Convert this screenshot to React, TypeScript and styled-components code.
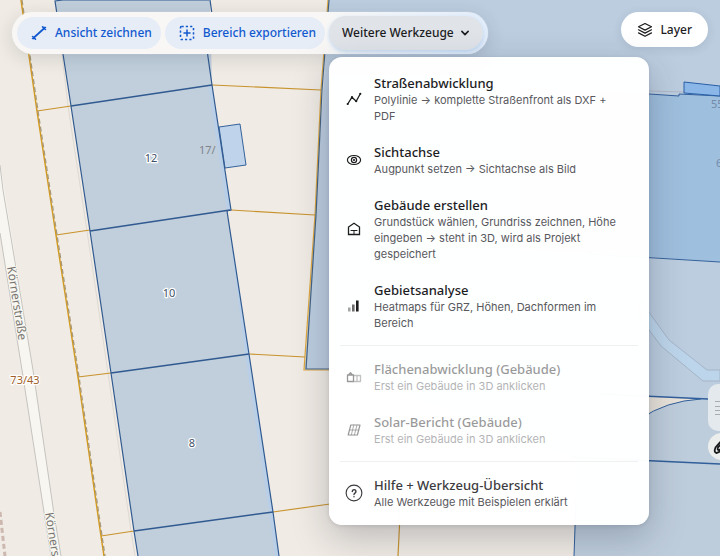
import React from "react";
import styled, { createGlobalStyle, css } from "styled-components";

const GlobalStyle = createGlobalStyle`
  *, *::before, *::after { box-sizing: border-box; }
  body { margin: 0; font-family: "Noto Sans", "Open Sans", sans-serif; color: #1d1d1f; overflow: hidden; }
  button { font: inherit; color: inherit; border: 0; margin: 0; cursor: pointer; }
`;

const Page = styled.main`
  display: grid;
  height: 100vh;
  overflow: hidden;
  background: #f0ebe4;
`;

const MapCanvas = styled.svg`
  grid-area: 1 / 1;
  width: 100%;
  height: 100%;
  min-height: 0;
  font-family: "Noto Sans", sans-serif;
`;

const Overlay = styled.div`
  grid-area: 1 / 1;
  z-index: 1;
  display: flex;
  justify-content: space-between;
  align-items: flex-start;
  padding: 12px;
`;

const Toolbar = styled.nav`
  display: flex;
  align-items: center;
  gap: 4px;
  height: 42px;
  padding: 0 5px;
  border-radius: 21px;
  background: linear-gradient(90deg, #f8f7f6 0 66%, #e2edfa 100%);
  box-shadow: 0 4px 18px rgba(40, 50, 70, 0.16), 0 0 1px rgba(255, 255, 255, 0.9);
`;

const ToolButton = styled.button`
  display: flex;
  align-items: center;
  justify-content: center;
  gap: 8px;
  height: 32px;
  padding: 0 9px 0 14px;
  border-radius: 16px;
  background: #e6edf7;
  color: #1259cf;
  font-size: 12px;
  font-weight: 500;
  line-height: 18px;
  white-space: nowrap;
`;

const MoreButton = styled(ToolButton)`
  gap: 6px;
  height: 34px;
  padding: 0 13px;
  border-radius: 17px;
  background: #e0e4e9;
  color: #1d1d1f;
  box-shadow: 0 2px 4px rgba(110, 165, 230, 0.35);
`;

const MenuAnchor = styled.div`
  position: relative;
`;

const Menu = styled.div`
  position: absolute;
  top: calc(100% + 7px);
  left: 0;
  width: 320px;
  padding: 8px 7px 5px;
  border-radius: 13px;
  background: rgba(255, 255, 255, 0.985);
  box-shadow: 0 12px 36px rgba(30, 40, 60, 0.26), 0 1px 4px rgba(30, 40, 60, 0.12);
`;

const MenuItem = styled.button<{ $tone?: "soft" }>`
  display: grid;
  grid-template-columns: 18px 1fr;
  align-items: center;
  gap: 11px;
  width: 100%;
  padding: 9px 16px 10px 9px;
  border-radius: 8px;
  background: transparent;
  text-align: left;
  ${({ $tone }) => $tone === "soft" && css`color: #3c3c40;`}
  &:disabled { opacity: 0.45; cursor: default; }
`;

const ItemIcon = styled.span`
  display: flex;
  justify-content: center;
`;

const ItemText = styled.span`
  display: flex;
  flex-direction: column;
`;

const ItemTitle = styled.span`
  font-size: 13px;
  font-weight: 500;
  line-height: 18px;
`;

const ItemNote = styled.span`
  color: #58585d;
  font-family: Inter, sans-serif;
  font-size: 11px;
  line-height: 16px;
`;

const Divider = styled.hr`
  height: 1px;
  margin: 4px 4px 5px;
  border: 0;
  background: #f0f0f1;
`;

const LayerButton = styled.button`
  display: flex;
  align-items: center;
  gap: 7px;
  height: 35px;
  padding: 0 16px;
  border-radius: 18px;
  background: #fff;
  box-shadow: 0 2px 10px rgba(40, 60, 90, 0.12);
  font-size: 12px;
  font-weight: 500;
`;

const SideDock = styled.aside`
  position: absolute;
  top: 384px;
  right: 0;
  display: flex;
  flex-direction: column;
  gap: 2px;
  width: 12px;
  overflow: hidden;
  z-index: 1;
`;

const DockButton = styled.button<{ $round?: boolean }>`
  display: flex;
  align-items: center;
  width: 40px;
  height: ${({ $round }) => ($round ? 27 : 47)}px;
  padding: 0 ${({ $round }) => ($round ? 5 : 7)}px;
  border-radius: ${({ $round }) => ($round ? 14 : 10)}px;
  background: ${({ $round }) => ($round ? "#eceeed" : "#e4e9ed")};
`;

function Svg({ size = 16, children }: { size?: number; children: React.ReactNode }) {
  return (
    <svg width={size} height={size} viewBox="0 0 16 16" fill="none" stroke="currentColor" strokeWidth="1.3" strokeLinecap="round" strokeLinejoin="round" aria-hidden="true">
      {children}
    </svg>
  );
}

const icons = {
  polyline: (
    <>
      <path d="M1.700 13 6 6.200l4.200 4L14.300 2.800" />
      <g fill="currentColor" stroke="none">
        <circle cx="1.700" cy="13" r="1.100" /><circle cx="6" cy="6.200" r="1.100" />
        <circle cx="10.200" cy="10.200" r="1.100" /><circle cx="14.300" cy="2.800" r="1.100" />
      </g>
    </>
  ),
  eye: (
    <>
      <ellipse cx="8" cy="8" rx="6.600" ry="4.500" strokeWidth="1.200" />
      <circle cx="8" cy="8" r="2.600" strokeWidth="1.200" />
      <circle cx="8" cy="8" r="1.100" fill="currentColor" stroke="none" />
    </>
  ),
  house: (
    <>
      <path d="M2.500 13.500V6L8 2.300 13.500 6v7.500Z" strokeLinejoin="miter" />
      <path d="M5 9.500h6M8 9.500v4" strokeWidth="1" />
    </>
  ),
  bars: (
    <g fill="currentColor" stroke="none">
      <rect x="2" y="9.500" width="2.600" height="4" opacity=".4" />
      <rect x="6" y="6.500" width="2.600" height="7" opacity=".65" />
      <rect x="10" y="2.500" width="2.600" height="11" />
    </g>
  ),
  facades: (
    <>
      <path d="M1.500 6h6v6.500h-6zM2.500 6 4.500 3.800 6.500 6" />
      <path d="M7.500 6.500h7v6h-7M11 6.500v6" opacity=".6" />
    </>
  ),
  solar: (
    <>
      <path d="M4.800 3H14l-2.600 10H2.200Z" strokeWidth="1.200" />
      <path d="M7.800 3 5.300 13M11 3 8.400 13M3.500 8h9.200" strokeWidth=".8" />
    </>
  ),
};

type Tool = { icon: keyof typeof icons; title: string; note: string; disabled?: boolean };

const tools: Tool[] = [
  { icon: "polyline", title: "Straßenabwicklung", note: "Polylinie → komplette Straßenfront als DXF + PDF" },
  { icon: "eye", title: "Sichtachse", note: "Augpunkt setzen → Sichtachse als Bild" },
  { icon: "house", title: "Gebäude erstellen", note: "Grundstück wählen, Grundriss zeichnen, Höhe eingeben → steht in 3D, wird als Projekt gespeichert" },
  { icon: "bars", title: "Gebietsanalyse", note: "Heatmaps für GRZ, Höhen, Dachformen im Bereich" },
];

const buildingTools: Tool[] = [
  { icon: "facades", title: "Flächenabwicklung (Gebäude)", note: "Erst ein Gebäude in 3D anklicken", disabled: true },
  { icon: "solar", title: "Solar-Bericht (Gebäude)", note: "Erst ein Gebäude in 3D anklicken", disabled: true },
];

function ToolEntry({ icon, title, note, disabled }: Tool) {
  return (
    <MenuItem role="menuitem" disabled={disabled}>
      <ItemIcon><Svg>{icons[icon]}</Svg></ItemIcon>
      <ItemText>
        <ItemTitle>{title}</ItemTitle>
        <ItemNote>{note}</ItemNote>
      </ItemText>
    </MenuItem>
  );
}

function CityMap() {
  return (
    <MapCanvas viewBox="0 0 720 556" preserveAspectRatio="xMinYMin slice" role="img" aria-label="Karte">
      <rect width="720" height="556" fill="#f0ebe4" />
      <path d="M0 163 22 300 33 370 54 514 61 556H51L44 512 22 370 0 233Z" fill="#f8f6f0" />
      <g fill="none" stroke="#c5c3bf">
        <path d="M0 165 3 190 33 370 54 514 61 556" />
        <path d="M0 233 22 370 44 512 51 556" />
      </g>
      <path d="M0 512 5 556" stroke="#cdb8b0" strokeWidth="3" strokeDasharray="5 3" />

      <path d="m62 54 6 52 19 125 21 142 23 158 4 25" stroke="#ddd9d3" fill="none" />
      <path d="M55 1 63 0H210L212 85 231 211 227 211 249 354 273 512 279 556H138L134 531 111 373 90 231 71 106Z" fill="#c1cfdc" />
      <path d="M208 85 227 211 245 354 269 512 275 556h4L273 512 249 354 227 211h4L212 85Z" fill="#b6d0ec" opacity=".65" />
      <path d="m219 127 21-3 6 41-21 3Z" fill="#bfd4ea" stroke="#35629b" />

      <path d="M329 0H720V556H574L577 460 340 369H305L315 215Z" fill="#bccddf" />
      <path d="M574 556 578 400H720V556Z" fill="#becddb" />
      <path d="m520 88 129 6 30 2v-2h41v168l-71-5-129-8Z" fill="#9fbfde" />
      <path d="m649 94 30 2v-2l41 2M590 254l130 8" fill="none" stroke="#35629b" />
      <path d="M649 91 684 92" stroke="#b0b8c6" />
      <path d="m684 82 36 4v10l-36-3Z" fill="#8ab6e8" stroke="#2a5fa6" />
      <path d="m640 300 29 40 38 30h13v11h-17l-42-35-21-28Z" fill="#bdd5ea" stroke="#a5b5c7" />
      <path d="m640 396 61 3q-30 1-61 19Z" fill="#e9e3da" />
      <g fill="none" stroke="#315f9b">
        <path d="m600 394 108 5h12" strokeWidth="1.400" />
        <path d="M640 419Q666 401 701 399" />
        <path d="m570 457 150 7" strokeWidth="1.400" />
        <path d="M576 500 574 556" />
      </g>

      <g fill="none" stroke="#c8932e" strokeWidth="1.200">
        <path d="M328 0 321 90 315 215 304 370H335" stroke="#dda63c" />
        <path d="m37 111 34-5M212 85l109 5M56 235l34-5M231 210l84 5M78 377l33-4M249 354l56 3M101 536l33-5M273 512l57-8M400 515l-2 41" />
        <path d="m21 0 16 111 19 124 22 142 23 159 3 20" stroke="#d39a20" strokeWidth="1.500" />
      </g>
      <path d="m22 0 16 111 19 124 22 142 23 159 3 20" fill="none" stroke="#a89878" strokeWidth="1.300" strokeDasharray="5 3" />
      <g fill="none" stroke="#315a90" strokeWidth="1.200">
        <path d="M209 0H63L55 1 63 54 71 106 90 231 111 373 134 531 138 556" />
        <path d="M210 0 212 14M207 50 212 85 231 210 227 211 249 354 273 512 279 556" />
        <path d="m71 106 141-21M90 231l140-21M111 373l138-19M134 531l139-19" strokeWidth="1.500" />
        <path d="M329 0 322 90 316 215 306 369H335" stroke="#456384" />
      </g>

      <g fontSize="11" textAnchor="middle" fill="#3f5068" stroke="#fff" strokeWidth="2.500" strokeLinejoin="round" paintOrder="stroke">
        <text x="151" y="162">12</text>
        <text x="169" y="297">10</text>
        <text x="192" y="447">8</text>
        <text x="25" y="384" fill="#a05f28">73/43</text>
      </g>
      <g fontSize="11" fill="#7f858b">
        <text x="199" y="154">17/</text>
        <text x="711" y="108" fill="#718ba8">55</text>
        <text x="716" y="167" fill="#718ba8">6</text>
      </g>
      <g fontSize="12" fill="#777570" stroke="#f8f6f0" strokeWidth="2" paintOrder="stroke">
        <text transform="translate(7 267) rotate(81)">Körnerstraße</text>
        <text transform="translate(45 513) rotate(81)">Körnerstraße</text>
      </g>
    </MapCanvas>
  );
}

export default function App() {
  return (
    <>
      <GlobalStyle />
      <Page>
        <CityMap />
        <Overlay>
          <Toolbar aria-label="Werkzeuge">
            <ToolButton>
              <Svg>
                <path d="M3 12.500 13 3.500" strokeWidth="1.700" />
                <path d="M1.500 11.500 3 12.500l1.500 1.700M11.500 1.800 13 3.500l1.500 1M1.500 13.500h2M12.500 2.500h2" strokeWidth="1.500" />
              </Svg>
              Ansicht zeichnen
            </ToolButton>
            <ToolButton>
              <Svg>
                <rect x="1.500" y="1.500" width="13" height="13" rx="1" strokeDasharray="2.200 2.100" strokeWidth="1.500" strokeLinecap="butt" />
                <path d="M8 5v6M5 8h6" strokeWidth="1.500" />
              </Svg>
              Bereich exportieren
            </ToolButton>
            <MenuAnchor>
              <MoreButton aria-haspopup="menu" aria-expanded="true">
                Weitere Werkzeuge
                <Svg size={10}><path d="m3 5.500 5 5 5-5" strokeWidth="2.600" /></Svg>
              </MoreButton>
              <Menu role="menu">
                {tools.map((t) => <ToolEntry key={t.title} {...t} />)}
                <Divider />
                {buildingTools.map((t) => <ToolEntry key={t.title} {...t} />)}
                <Divider />
                <MenuItem role="menuitem" $tone="soft">
                  <ItemIcon>
                    <Svg size={18}>
                      <circle cx="8" cy="8" r="7" strokeWidth="1" />
                      <path d="M6.500 6.600a1.600 1.600 0 1 1 2.400 1.400c-.6.4-.9.6-.9 1.300M8 11.300v.1" strokeWidth="1.300" />
                    </Svg>
                  </ItemIcon>
                  <ItemText>
                    <ItemTitle>Hilfe + Werkzeug-Übersicht</ItemTitle>
                    <ItemNote>Alle Werkzeuge mit Beispielen erklärt</ItemNote>
                  </ItemText>
                </MenuItem>
              </Menu>
            </MenuAnchor>
          </Toolbar>
          <LayerButton>
            <Svg>
              <path d="m8 1.500 6.500 3.300L8 8.100 1.500 4.800ZM1.500 7.800 8 11.100l6.500-3.300M1.500 10.900 8 14.200l6.500-3.300" strokeWidth="1.200" />
            </Svg>
            Layer
          </LayerButton>
        </Overlay>
        <SideDock>
          <DockButton aria-label="Liste">
            <svg width="16" height="18" viewBox="0 0 16 18" stroke="#a9adb3" aria-hidden="true"><path d="M0 2.500h16M0 7.500h16M0 11.500h16M0 15.500h16" /></svg>
          </DockButton>
          <DockButton $round aria-label="Zeichnen">
            <svg width="16" height="16" viewBox="0 0 16 16" fill="none" stroke="#18191b" strokeWidth="1.800" aria-hidden="true"><path d="M9 1 2.500 8.500Q.5 13.500 3.500 14L10 11M9 4 5 8.500Q4 11 6 11l4-2" /></svg>
          </DockButton>
        </SideDock>
      </Page>
    </>
  );
}
